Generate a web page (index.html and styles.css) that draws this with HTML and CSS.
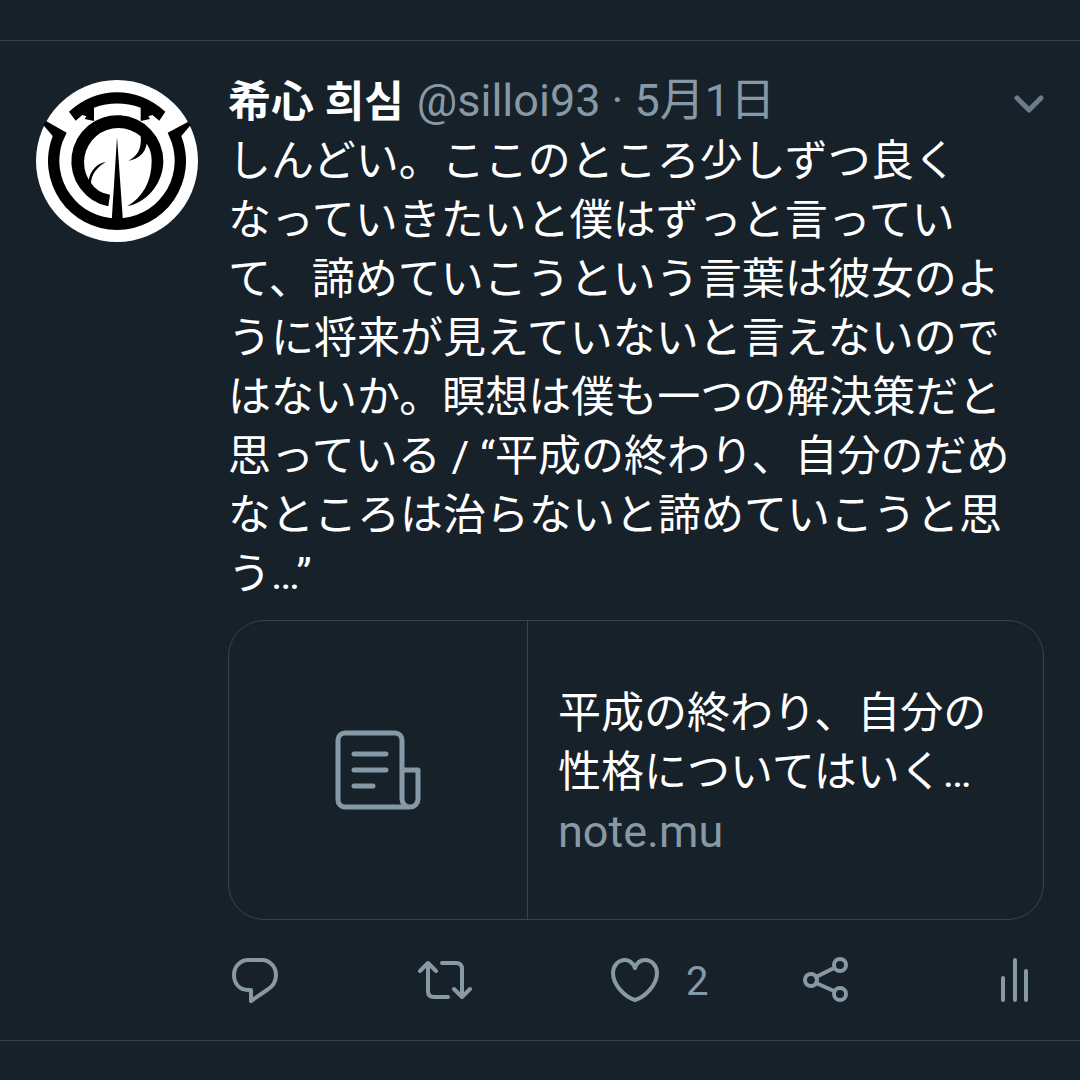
FILE: index.html
```html
<!DOCTYPE html>
<html lang="ja">
<head>
<meta charset="utf-8">
<meta name="viewport" content="width=device-width, initial-scale=1">
<title>希心 희심 (@silloi93)</title>
<link rel="stylesheet" href="styles.css">
</head>
<body>
<main class="timeline">
  <article class="tweet">
    <a class="avatar" href="#" aria-label="希心 희심">
      <svg viewBox="48 45 486 486" aria-hidden="true">
        <circle cx="291" cy="288" r="243" fill="#fff"/>
        <path d="M70 180L78 168L140 203L127 232A173 173 0 1 0 455 232L443 203L505 170L512 180L484 213A207 207 0 1 1 98 213Z"/>
        <path d="M147 140Q212 82 291 82T436 140L418 167L397 150L385 154L390 162L362 168V128Q291 103 222 128V168L194 162L199 154L187 150L167 167Z"/>
        <path d="M265 424A138 138 0 1 1 430 288C430 350 386 410 322 424C368 396 395 350 395 288C395 265 389 249 380 236C376 264 354 283 325 287C352 275 366 250 362 214A103 103 0 0 0 206 344C212 316 230 296 258 290C230 307 214 328 213 354Q232 384 270 389Z"/>
        <path d="M291 216L309 470H275Z"/>
      </svg>
    </a>
    <div class="content">
      <header class="head">
        <a class="name" href="#">希心 <span lang="ko">희심</span></a>
        <span class="meta">@silloi93 · <time datetime="05-01">5月1日</time></span>
        <button class="more" type="button" aria-label="メニュー">
          <svg viewBox="0 0 30 18" aria-hidden="true"><path d="M3 3L15 15L27 3"/></svg>
        </button>
      </header>
      <p class="text">しんどい。ここのところ少しずつ良く<br>なっていきたいと僕はずっと言ってい<br>て、諦めていこうという言葉は彼女のよ<br>うに将来が見えていないと言えないので<br>はないか。瞑想は僕も一つの解決策だと<br>思っている / “平成の終わり、自分のだめ<br>なところは治らないと諦めていこうと思<br>う…”</p>
      <a class="card" href="#">
        <span class="thumb">
          <svg viewBox="0 0 84 78" aria-hidden="true">
            <path d="M74 76H9A7 7 0 0 1 2 69V9A7 7 0 0 1 9 2H59A7 7 0 0 1 66 9V68A8 8 0 0 0 82 68V39H66M82 68A8 8 0 0 1 74 76"/>
            <path d="M18 23H50M18 39H50M18 55H37"/>
          </svg>
        </span>
        <span class="summary">
          <span class="title">平成の終わり、自分の<br>性格についてはいく…</span>
          <span class="domain">note.mu</span>
        </span>
      </a>
      <div class="actions">
        <button type="button" aria-label="返信">
          <svg viewBox="0 0 54 54"><path d="M20 7H34C42 7 48 14 48 22C48 29 44 34 39 37L23 48V37H20C11 37 6 30 6 22C6 14 12 7 20 7Z"/></svg>
        </button>
        <button type="button" aria-label="リツイート">
          <svg viewBox="0 0 54 54"><path d="M2 18L10 10L18 18M10 10V38Q10 44 16 44H30M24 10H38Q44 10 44 16V44M36 36L44 44L52 36"/></svg>
        </button>
        <button type="button" aria-label="いいね 2">
          <svg viewBox="0 0 54 54"><path d="M27 15C25 9 20 7 17 7C10 7 5 13 5 20C5 32 17 44 27 47C37 44 49 32 49 20C49 13 44 7 37 7C33 7 29 9 27 15Z"/></svg>
          <span class="count">2</span>
        </button>
        <button type="button" aria-label="共有">
          <svg viewBox="0 0 54 54"><circle cx="13" cy="27" r="6"/><circle cx="42" cy="12" r="6"/><circle cx="42" cy="41" r="6"/><path d="M18 24L36 15M18 30L36 38"/></svg>
        </button>
        <button type="button" aria-label="アクティビティ">
          <svg viewBox="0 0 54 54"><path d="M15 25V47M27 7V47M38 18V47"/></svg>
        </button>
      </div>
    </div>
  </article>
</main>
</body>
</html>
```
FILE: styles.css
```css
* { box-sizing: border-box; }

body {
  margin: 0;
  background: #17202a;
  background: #17212a;
  color: #fff;
  font-family: Roboto, "Noto Sans CJK JP", sans-serif;
  font-size: 43px;
  line-height: 59px;
}

a { color: inherit; text-decoration: none; }

button {
  padding: 0;
  border: 0;
  background: none;
  color: inherit;
  font: inherit;
  cursor: pointer;
}

svg {
  display: block;
  flex: none;
}

.timeline { padding: 40px 0; }

.tweet {
  display: flex;
  gap: 30px;
  padding: 28px 36px 33px;
  border: solid #38444d;
  border-width: 1px 0;
}

.avatar {
  flex: none;
  width: 162px;
  margin-top: 11px;
}

.content {
  flex: 1;
  min-width: 0;
}

.head {
  display: flex;
  align-items: center;
  gap: 13px;
  white-space: nowrap;
}

.name { font-weight: 700; }

.name [lang="ko"] { font-family: "Noto Sans CJK KR", sans-serif; }

.meta {
  color: #8899a6;
  font-size: 45px;
}

.more {
  margin-left: auto;
  padding-top: 6px;
  color: #6b7d8c;
}

.more svg {
  width: 30px;
  fill: none;
  stroke: currentColor;
  stroke-width: 5;
  stroke-linecap: round;
  stroke-linejoin: round;
}

.text { margin: 0; }

.card {
  display: flex;
  min-height: 300px;
  margin-top: 16px;
  border: 1px solid #38444d;
  border-radius: 36px;
}

.thumb {
  display: flex;
  flex: none;
  align-items: center;
  justify-content: center;
  width: 299px;
  border-right: 1px solid #38444d;
}

.thumb svg {
  width: 84px;
  overflow: visible;
  fill: none;
  stroke: #8899a6;
  stroke-width: 5;
  stroke-linecap: round;
  stroke-linejoin: round;
}

.summary {
  display: flex;
  flex-direction: column;
  justify-content: center;
  padding: 4px 30px 0;
}

.domain {
  color: #8899a6;
  font-size: 45px;
}

.actions {
  display: grid;
  grid-template-columns: repeat(4, 1fr) 54px;
  margin-top: 33px;
  padding-right: 2px;
  color: #8899a6;
}

.actions button {
  display: flex;
  align-items: center;
  gap: 24px;
  line-height: 50px;
}

.actions svg {
  width: 54px;
  fill: none;
  stroke: currentColor;
  stroke-width: 4;
  stroke-linecap: round;
  stroke-linejoin: round;
}

.count {
  padding-top: 4px;
  font-size: 40px;
}
```
